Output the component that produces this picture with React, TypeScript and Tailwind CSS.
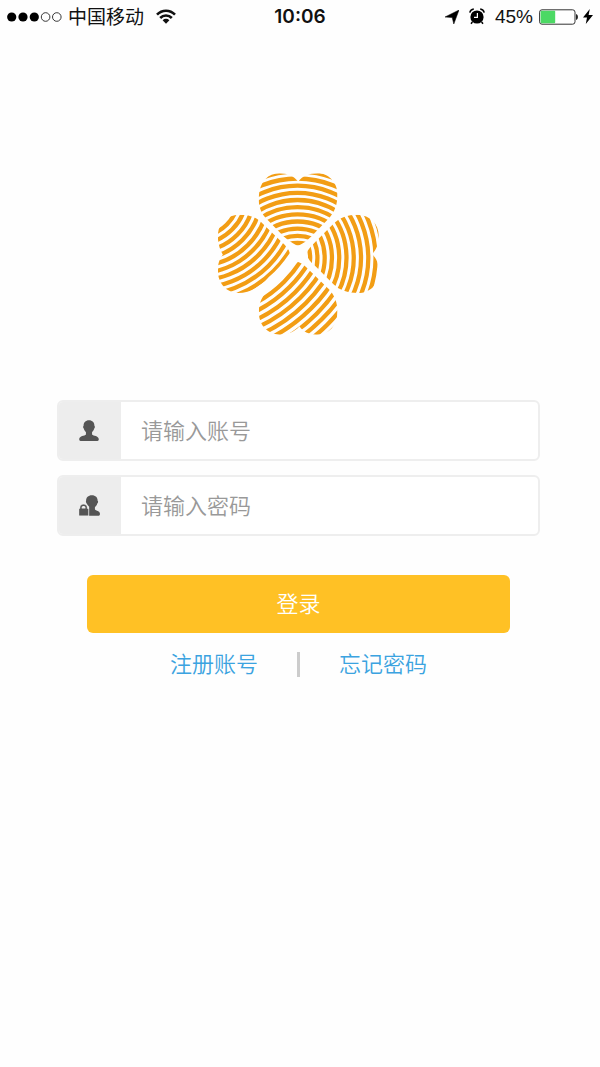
import type { ReactNode } from 'react';

function rings(first: number, step: number, count: number): number[] {
  return Array.from({ length: count }, (_, i) => first + step * i);
}

const leaves = [
  {
    id: 'leaf-top',
    outline:
      'M279 259 C268 254 250 243 236 230 L182 174 C166 156 160 134 162 108 C165 66 190 41 224 41 C248 41 268 50 280 66 C292 50 312 41 338 41 C370 41 397 66 398 104 C398 134 390 156 374 174 L320 230 C306 244 292 254 279 259 Z',
    cx: 278,
    cy: 345,
    radii: rings(95, 21.5, 11),
  },
  {
    id: 'leaf-left',
    outline:
      'M255 280 C236 308 216 332 192 352 C166 382 134 400 100 400 C62 398 39 370 39 332 C39 312 44 296 54 285 C44 268 39 250 39 228 C40 190 66 166 102 165 C134 165 156 172 174 192 L230 246 C244 258 252 268 255 280 Z',
    cx: -20,
    cy: 108,
    radii: rings(78, 22, 12),
  },
  {
    id: 'leaf-right',
    outline:
      'M304 282 C310 268 320 258 332 246 L386 192 C404 174 428 165 458 165 C496 166 521 192 522 228 C522 250 516 268 502 283 C516 298 522 314 522 336 C521 376 494 400 460 400 C428 400 404 392 386 374 L332 320 C318 308 308 296 304 282 Z',
    cx: 210,
    cy: 295,
    radii: rings(106, 21.8, 14),
  },
  {
    id: 'leaf-bottom',
    outline:
      'M280 307 C292 310 302 320 312 330 L374 390 C390 408 398 430 398 456 C397 498 372 524 336 525 C312 525 294 516 284 500 C270 516 250 525 224 525 C188 523 163 498 162 460 C162 436 168 416 184 398 C216 368 238 340 256 322 C264 314 270 308 280 307 Z',
    cx: -20,
    cy: 108,
    radii: rings(365, 22.8, 10),
  },
];

function CloverLogo() {
  return (
    <svg viewBox="40 40 485 486" className="size-[162px]" role="img" aria-label="四叶草">
      {leaves.map((leaf) => (
        <g key={leaf.id}>
          <clipPath id={leaf.id}>
            <path d={leaf.outline} />
          </clipPath>
          <g clipPath={`url(#${leaf.id})`} fill="none" stroke="#f29d14" strokeWidth="12.8">
            {leaf.radii.map((r) => (
              <circle key={r} cx={leaf.cx} cy={leaf.cy} r={r} />
            ))}
          </g>
        </g>
      ))}
    </svg>
  );
}

function UserIcon() {
  return (
    <svg viewBox="30 26 58 62" className="h-[21px] w-[20px]" fill="#555" aria-hidden="true">
      <path d="M59 27 C69 27 75 34 75 43 C77 44 77 50 74 52 C73 57 70 60 68 62 V69 C72 74 87 72 88 83 Q88 88 84 88 H34 Q30 88 30 83 C31 72 46 74 50 69 V62 C48 60 45 57 44 52 C41 50 41 44 43 43 C43 34 49 27 59 27 Z" />
    </svg>
  );
}

function UserLockIcon() {
  return (
    <svg viewBox="26 29 62 62" className="size-[21px]" fill="#555" aria-hidden="true">
      <path d="M64 30 C75 30 81 37 81 46 C83 47 83 52 80 54 C79 59 75 63 73 65 V71 C76 77 88 75 88 85 Q88 90 84 90 H56 V64 C53 61 51 58 49 55 C46 52 46 47 47 46 C47 37 53 30 64 30 Z" />
      <path d="M26 71 Q26 69 29 69 V66 C29 53 50 53 50 66 V69 Q54 69 54 71 V88 Q54 90 52 90 H28 Q26 90 26 88 Z" stroke="#ededed" strokeWidth="1" />
      <path d="M34 69 V66 C34 60 45 60 45 66 V69 Z" fill="#ededed" />
    </svg>
  );
}

function WifiIcon() {
  return (
    <svg viewBox="0 0 20 15" className="ml-[12px] h-[15px] w-[20px]" aria-hidden="true">
      <g fill="none" stroke="#111" strokeWidth="2.6">
        <path d="M1 5.6 C6 0.4 14 0.4 19 5.6" />
        <path d="M4.2 9 C7.4 5.7 12.6 5.7 15.8 9" />
      </g>
      <path d="M6.6 11.2 C8.6 9.4 11.4 9.4 13.4 11.2 L10 14.8 Z" fill="#111" />
    </svg>
  );
}

function StatusBar() {
  return (
    <header className="grid h-[33px] grid-cols-[1fr_auto_1fr] items-center px-[7px] text-[#111]">
      <div className="flex items-center">
        <svg viewBox="0 0 55 10" className="h-[10px] w-[55px]" aria-hidden="true">
          <g fill="#000">
            <circle cx="4.7" cy="5" r="4.6" />
            <circle cx="16" cy="5" r="4.6" />
            <circle cx="27.3" cy="5" r="4.6" />
          </g>
          <g fill="none" stroke="#222" strokeWidth="0.9">
            <circle cx="38.6" cy="5" r="4.3" />
            <circle cx="49.8" cy="5" r="4.3" />
          </g>
        </svg>
        <span className="ml-[6px] pt-[2px] text-[19px] leading-[28px]">中国移动</span>
        <WifiIcon />
      </div>
      <time className="font-[Inter] text-[19px] leading-[28px] font-semibold">10:06</time>
      <div className="flex items-center justify-end">
        <svg viewBox="0 0 14 14" className="size-[14px]" aria-hidden="true">
          <path d="M14 0 L8.8 14 L7.2 7.6 L0 7 Z" fill="#000" stroke="#000" strokeWidth="0.5" />
        </svg>
        <svg viewBox="0 0 16 17" className="ml-[10px] h-[17px] w-[16px]" aria-hidden="true">
          <circle cx="8" cy="9" r="6.6" fill="#000" />
          <path d="M0.8 4.6 C1.2 2.6 2.8 1.2 4.8 1 M15.2 4.6 C14.8 2.6 13.2 1.2 11.2 1" fill="none" stroke="#000" strokeWidth="1.5" />
          <path d="M3.4 14 L2 15.8 M12.6 14 L14 15.8" stroke="#000" strokeWidth="1.5" />
          <path d="M8.4 5 V9.4 H5" fill="none" stroke="#fff" strokeWidth="1.2" />
        </svg>
        <span className="ml-[10px] text-[19px] leading-[28px]">45%</span>
        <svg viewBox="0 0 40 16" className="ml-[6px] h-[16px] w-[40px]" aria-hidden="true">
          <rect x="0.6" y="0.8" width="35.4" height="14.4" rx="2.4" fill="#fff" stroke="#333" strokeWidth="1" />
          <rect x="1.6" y="1.8" width="14.6" height="12.4" rx="1" fill="#4cd964" />
          <path d="M37 5 C39.6 5.6 39.6 10.4 37 11 Z" fill="#222" />
        </svg>
        <svg viewBox="0 0 10 15" className="ml-[4px] h-[15px] w-[10px]" aria-hidden="true">
          <path d="M6.8 0 L0 8.4 H4 L2.8 15 L10 6 H5.6 Z" fill="#000" />
        </svg>
      </div>
    </header>
  );
}

interface FieldProps {
  id: string;
  type: string;
  label: string;
  icon: ReactNode;
}

function Field({ id, type, label, icon }: FieldProps) {
  return (
    <div className="flex h-[61px] overflow-hidden rounded-md border-2 border-[#eeeeee] bg-white">
      <label htmlFor={id} aria-label={label} className="flex w-[62px] items-center justify-center bg-[#ededed] pr-[2px]">
        {icon}
      </label>
      <input
        id={id}
        type={type}
        placeholder={label}
        className="min-w-0 flex-1 bg-transparent px-[20px] pt-[2px] text-[22px] font-[350] text-gray-700 outline-none placeholder:text-[#999]"
      />
    </div>
  );
}

export default function App() {
  return (
    <div className="min-h-screen bg-[#fefefe] font-['Liberation_Sans','Noto_Sans_CJK_SC',sans-serif]">
      <StatusBar />
      <main className="pr-[60px] pl-[57px]">
        <div className="flex justify-center pt-[140px]">
          <CloverLogo />
        </div>
        <form className="pt-[65px]" onSubmit={(e) => e.preventDefault()}>
          <div className="flex flex-col gap-[14px]">
            <Field id="account" type="text" label="请输入账号" icon={<UserIcon />} />
            <Field id="password" type="password" label="请输入密码" icon={<UserLockIcon />} />
          </div>
          <div className="px-[30px] pt-[39px]">
            <button
              type="submit"
              className="h-[58px] w-full rounded-md bg-[#ffc125] text-[22px] font-[350] text-white"
            >
              登录
            </button>
          </div>
        </form>
        <nav className="flex items-center justify-center gap-[39px] pt-[14px] text-[22px] leading-[32px] font-[350] text-[#3ba3e0]">
          <a href="#register" className="pt-[2px]">
            注册账号
          </a>
          <span className="h-[25px] w-[3px] bg-[#ccc]" />
          <a href="#forgot" className="pt-[2px]">
            忘记密码
          </a>
        </nav>
      </main>
    </div>
  );
}
